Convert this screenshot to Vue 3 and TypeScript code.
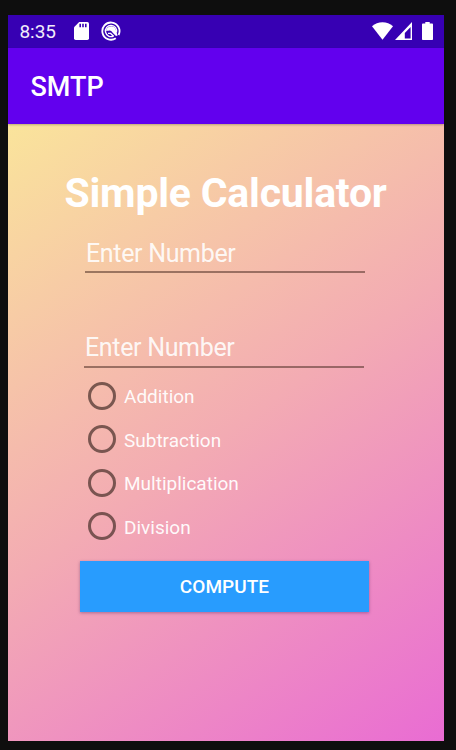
<script setup lang="ts">
import { ref } from 'vue'

const first = ref('')
const second = ref('')
const operation = ref('')
const operations: string[] = ['Addition', 'Subtraction', 'Multiplication', 'Division']
</script>

<template>
  <div class="screen">
    <header class="status">
      <span class="clock">8:35</span>
      <svg class="sd" width="15" height="18" viewBox="0 0 15 18">
        <path fill="#fff" d="M5.2 0H13.3Q15 0 15 1.7V16.3Q15 18 13.3 18H1.7Q0 18 0 16.3V5.3Z" />
        <path stroke="#3700b3" stroke-width="1.6" d="M6.2 1.8V5.3M9 1.8V5.3M11.8 1.8V5.3" />
      </svg>
      <svg class="sync" width="20" height="20" viewBox="0 0 20 20" fill="none" stroke="#fff">
        <path stroke-width="1.8" d="M14.8 17.2A8.6 8.6 0 1 1 17.6 14" />
        <path stroke-width="1.4" d="M12.5 15A5.6 5.6 0 1 1 15.4 11.5" />
        <path fill="#fff" stroke="none" d="M4.8 9.8Q6 5.2 10.5 5.2Q14.8 5.8 15.2 10.5L16.6 14.6L15 15L11.5 11.6Q9.8 8.8 7.5 9.8Z" />
        <path stroke-width="1.3" d="M7 12.4H9.6L12.6 15.2" />
      </svg>
      <span class="spacer"></span>
      <svg class="wifi" width="21" height="18" viewBox="0 0 21 18">
        <path fill="#fff" d="M0 4.3Q4.5 0.2 10.5 0.2T21 4.3L10.5 17.8Z" />
      </svg>
      <svg class="signal" width="17" height="18" viewBox="0 0 17 18">
        <path fill="#fff" fill-rule="evenodd" d="M17 0V18H0ZM15.6 5L9.8 11V16.6H15.6Z" />
      </svg>
      <svg class="battery" width="11" height="18" viewBox="0 0 11 18">
        <path fill="#fff" d="M3.3 0H7.7V1.6H10.2Q11 1.6 11 2.4V17.2Q11 18 10.2 18H.8Q0 18 0 17.2V2.4Q0 1.6 .8 1.6H3.3Z" />
      </svg>
    </header>
    <div class="appbar">SMTP</div>
    <main class="content">
      <h1>Simple Calculator</h1>
      <input v-model="first" class="field" type="text" placeholder="Enter Number" />
      <input v-model="second" class="field second" type="text" placeholder="Enter Number" />
      <div class="options">
        <label v-for="name in operations" :key="name" class="option">
          <input v-model="operation" type="radio" name="operation" :value="name" />
          <span>{{ name }}</span>
        </label>
      </div>
      <button type="button" class="compute">COMPUTE</button>
    </main>
  </div>
</template>

<style>
body {
  background: #0e0e0e;
}
</style>

<style scoped>
.screen {
  box-sizing: border-box;
  width: 456px;
  height: 750px;
  padding: 15px 12px 9.5px 8.4px;
  background: #0e0e0e;
  display: flex;
  flex-direction: column;
  font-family: Roboto, sans-serif;
  color: #fff;
  overflow: hidden;
}
.status {
  height: 32.5px;
  box-sizing: border-box;
  flex: none;
  display: flex;
  align-items: center;
  padding: 0 11px;
  background: #3700b3;
}
.status svg {
  flex: none;
}
.clock {
  width: 54.6px;
  font-size: 19px;
  line-height: 32px;
  padding-top: 2px;
  color: #f1ecfa;
}
.sync {
  margin-left: 12.5px;
}
.spacer {
  flex: 1;
}
.wifi,
.signal,
.battery {
  margin-bottom: 1px;
}
.signal {
  margin-left: 2px;
}
.battery {
  margin-left: 10px;
}
.appbar {
  height: 76px;
  flex: none;
  box-sizing: border-box;
  padding: 1px 0 0 22px;
  line-height: 76px;
  font-size: 27px;
  font-weight: 500;
  background: #6200ee;
  box-shadow: 0 1px 2px rgba(0, 0, 0, 0.25);
  z-index: 1;
}
.content {
  flex: 1;
  min-height: 0;
  display: flex;
  flex-direction: column;
  align-items: flex-start;
  background: linear-gradient(144.8deg, #fae49b 0%, #f3abb3 50%, #e96cd3 100%);
}
h1 {
  margin: 44px 0 0 56.1px;
  font-size: 41px;
  line-height: 50px;
  font-weight: 700;
  letter-spacing: -0.23px;
  white-space: nowrap;
}
.field {
  box-sizing: border-box;
  width: 280px;
  height: 41.5px;
  margin: 14px 0 0 76.6px;
  padding: 4px 0 0 1px;
  border: 0;
  border-bottom: 2px solid rgba(70, 40, 30, 0.52);
  border-radius: 0;
  background: none;
  outline: none;
  color: #fff;
  font: 400 25px Roboto, sans-serif;
  letter-spacing: -0.33px;
}
.field::placeholder {
  color: rgba(255, 255, 255, 0.9);
  opacity: 1;
}
.second {
  margin: 53px 0 0 75.6px;
}
.options {
  margin: 6.5px 0 0 79.6px;
}
.option {
  display: flex;
  align-items: center;
  height: 43.5px;
  gap: 8px;
  font-size: 19px;
  color: rgba(255, 255, 255, 0.95);
}
.option span {
  padding-top: 2px;
}
.option input {
  appearance: none;
  box-sizing: border-box;
  width: 28px;
  height: 28px;
  margin: 0;
  border: 3px solid rgba(70, 45, 40, 0.7);
  border-radius: 50%;
}
.option input:checked {
  background: radial-gradient(circle, #7a5552 45%, transparent 50%);
}
.compute {
  width: 289px;
  height: 51px;
  margin: 13px 0 0 71.6px;
  padding: 0;
  border: 0;
  background: #289cfe;
  box-shadow: 0 1px 3px rgba(60, 30, 80, 0.4);
  color: #fff;
  font: 500 19px Roboto, sans-serif;
  letter-spacing: 0.05px;
}
</style>
